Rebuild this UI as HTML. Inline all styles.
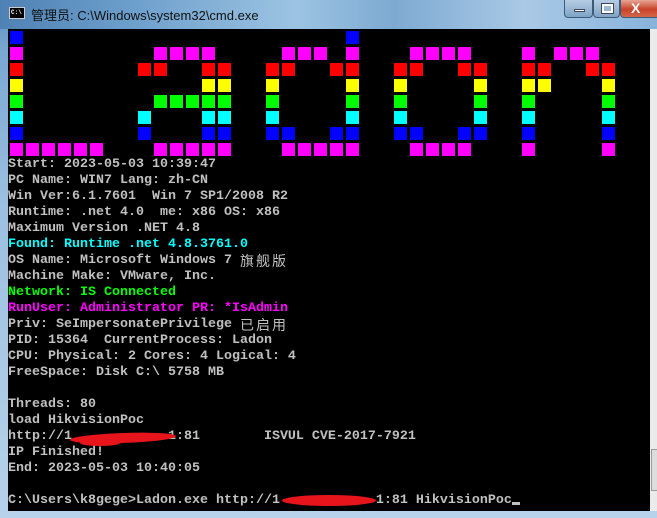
<!DOCTYPE html>
<html><head><meta charset="utf-8">
<style>
*{margin:0;padding:0;box-sizing:border-box}
html,body{width:657px;height:518px;overflow:hidden;background:#8db4d8}
#win{position:absolute;left:0;top:0;width:657px;height:518px;background:linear-gradient(180deg,#5b8fc0 0%,#7aa8d2 10%,#9cc0e0 40%,#b7d2ea 100%)}
#title{position:absolute;left:0;top:0;width:657px;height:29px;background:linear-gradient(90deg,#4f82b4 0%,#6d9fcc 20%,#9cc3e2 45%,#7eaad2 60%,#a9c9e6 80%,#88b3da 100%)}
#title .t{position:absolute;left:31px;top:5px;font:13px "Liberation Sans","Noto Sans CJK SC",sans-serif;color:#111}
#icon{position:absolute;left:9px;top:7px;width:16px;height:12px;background:#000;border:1px solid #ccc}
#icon span{position:absolute;left:1px;top:1px;font:bold 6px "Liberation Mono",monospace;color:#fff;line-height:7px}
.btn{position:absolute;top:0;height:18px;border:1px solid #3c5a7a;border-top:none;border-radius:0 0 4px 4px}
#mn{left:564px;width:29px;background:linear-gradient(#b6cde4,#7fa3c6)}
#mx{left:593px;width:27px;background:linear-gradient(#b6cde4,#7fa3c6)}
#cl{left:620px;width:40px;background:linear-gradient(#e8a595,#c8432a 55%,#d5664a)}
#con{position:absolute;left:8px;top:29px;width:642px;height:482px;background:#000;overflow:hidden}
.b{position:absolute;width:13px;height:13px}
.ln{position:absolute;left:0;height:16px;white-space:pre;font:bold 13.33px/16px "Liberation Mono","Noto Sans CJK SC",monospace;color:#c0c0c0;overflow:visible}
.cj{display:inline-block;height:16px;line-height:16px;vertical-align:top;font-family:"Noto Sans CJK SC",sans-serif;font-weight:normal;font-size:14px;letter-spacing:2px}
#sb{position:absolute;left:650px;top:29px;width:7px;height:482px;background:#ebebeb}
#thumb{position:absolute;left:651px;top:449px;width:6px;height:42px;background:#ddd;border:1px solid #999;border-right:none}
.red{position:absolute;background:#e8141c;border-radius:50%}
</style></head><body>
<div id="win">
<div id="title"><div id="icon"><span>C:\</span></div><div class="t">管理员: C:\Windows\system32\cmd.exe</div>
<div class="btn" id="mn"><div style="position:absolute;left:9px;top:9px;width:11px;height:3px;background:#fff;border:1px solid #445"></div></div>
<div class="btn" id="mx"><div style="position:absolute;left:8px;top:4px;width:11px;height:9px;border:2px solid #fff;outline:1px solid #445"></div></div>
<div class="btn" id="cl"><div style="position:absolute;left:10px;top:0;font:bold 14px 'Liberation Sans',sans-serif;color:#fff">X</div></div>
</div>
<div id="con">
<div id="blocks"></div>
<div class="ln" style="top:128px">Start: 2023-05-03 10:39:47</div>
<div class="ln" style="top:144px">PC Name: WIN7 Lang: zh-CN</div>
<div class="ln" style="top:160px">Win Ver:6.1.7601  Win 7 SP1/2008 R2</div>
<div class="ln" style="top:176px">Runtime: .net 4.0  me: x86 OS: x86</div>
<div class="ln" style="top:192px">Maximum Version .NET 4.8</div>
<div class="ln" style="top:208px;color:#00ffff">Found: Runtime .net 4.8.3761.0</div>
<div class="ln" style="top:224px">OS Name: Microsoft Windows 7 <span class="cj">旗舰版</span></div>
<div class="ln" style="top:240px">Machine Make: VMware, Inc.</div>
<div class="ln" style="top:256px;color:#00ff00">Network: IS Connected</div>
<div class="ln" style="top:272px;color:#ff00ff">RunUser: Administrator PR: *IsAdmin</div>
<div class="ln" style="top:288px">Priv: SeImpersonatePrivilege <span class="cj">已启用</span></div>
<div class="ln" style="top:304px">PID: 15364  CurrentProcess: Ladon</div>
<div class="ln" style="top:320px">CPU: Physical: 2 Cores: 4 Logical: 4</div>
<div class="ln" style="top:336px">FreeSpace: Disk C:\ 5758 MB</div>
<div class="ln" style="top:368px">Threads: 80</div>
<div class="ln" style="top:384px">load HikvisionPoc</div>
<div class="ln" style="top:400px">http://1            1:81        ISVUL CVE-2017-7921</div>
<div class="ln" style="top:416px">IP Finished!</div>
<div class="ln" style="top:432px">End: 2023-05-03 10:40:05</div>
<div class="ln" style="top:464px">C:\Users\k8gege&gt;Ladon.exe http://1            1:81 HikvisionPoc<span style="display:inline-block;width:8px;height:3px;background:#c0c0c0;vertical-align:-2px"></span></div>
<div class="red" style="left:62px;top:404px;width:106px;height:10px;transform:rotate(-2deg)"></div>
<div class="red" style="left:72px;top:411px;width:40px;height:6px"></div>
<div class="red" style="left:274px;top:466px;width:94px;height:11px"></div>
</div>
<div id="sb"></div><div id="thumb"></div>
</div>
<script>
var rows=[
[[0],[21]],
[[0],[9,10,11,12],[17,18,19,21],[25,26,27,28],[32,34,35,36]],
[[0],[8,9,12,13],[16,17,20,21],[24,25,28,29],[32,33,36,37]],
[[0],[12,13],[16,21],[24,29],[32,33,37]],
[[0],[9,10,11,12,13],[16,21],[24,29],[32,37]],
[[0],[8,12,13],[16,21],[24,29],[32,37]],
[[0],[8,12,13],[16,17,20,21],[24,25,28,29],[32,37]],
[[0,1,2,3,4,5],[9,10,11,12,13],[17,18,19,20,21],[25,26,27,28],[32,37]]];
var cols=["#0000ff","#ff00ff","#ff0000","#ffff00","#00ff00","#00ffff","#0000ff","#ff00ff"];
var h="";
rows.forEach(function(g,r){g.forEach(function(a){a.forEach(function(c){
h+='<div class="b" style="left:'+(2+16*c)+'px;top:'+(2+16*r)+'px;background:'+cols[r]+'"></div>';});});});
document.getElementById("blocks").innerHTML=h;
</script>
</body></html>
